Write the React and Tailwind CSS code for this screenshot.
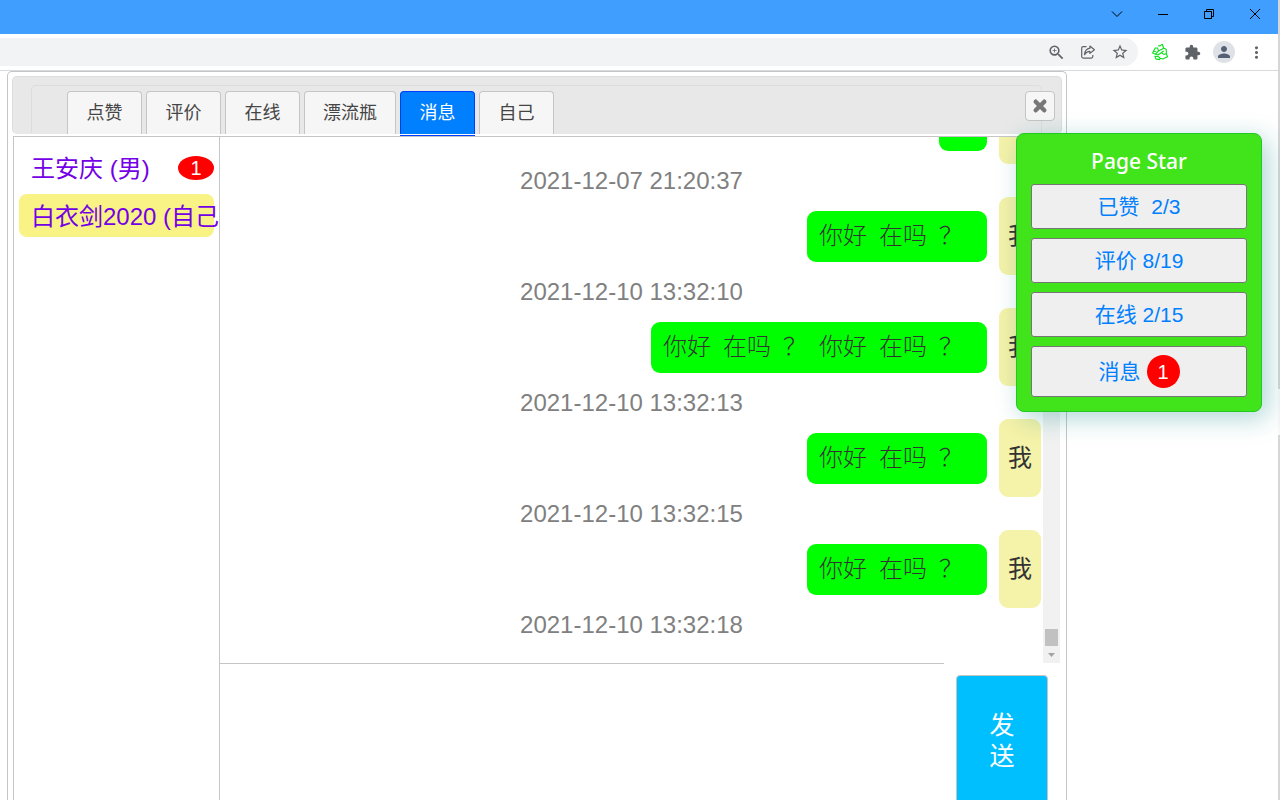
import React from "react";
import { MdExtension, MdStarBorder, MdPerson, MdMoreVert, MdZoomIn } from "react-icons/md";

const tabs = ["点赞", "评价", "在线", "漂流瓶", "消息", "自己"];

const messages = [
  { text: "好", time: "2021-12-07 21:20:37" },
  { text: "你好\u2002在吗\u2002？\u2002", time: "2021-12-10 13:32:10" },
  { text: "你好\u2002在吗\u2002？\u2002你好\u2002在吗\u2002？\u2002", time: "2021-12-10 13:32:13" },
  { text: "你好\u2002在吗\u2002？\u2002", time: "2021-12-10 13:32:15" },
  { text: "你好\u2002在吗\u2002？\u2002", time: "2021-12-10 13:32:18" },
];

function WindowButton({ label, children }) {
  return (
    <button type="button" aria-label={label} className="flex h-7 w-[46px] items-center justify-center">
      <svg width="12" height="12" viewBox="0 0 12 12" fill="none" stroke="#000" strokeWidth="1">
        {children}
      </svg>
    </button>
  );
}

function TitleBar() {
  return (
    <header className="flex h-[34px] shrink-0 justify-end bg-[#409eff]">
      <WindowButton label="Search tabs"><path d="M1 3.5 6 8.5 11 3.5" /></WindowButton>
      <WindowButton label="Minimize"><path d="M1 6.5H11" /></WindowButton>
      <WindowButton label="Restore"><path d="M1.5 3.5H8.5V10.5H1.5ZM3.5 3.5V1.5H10.5V8.5H8.5" /></WindowButton>
      <WindowButton label="Close"><path d="M1 1 11 11M11 1 1 11" /></WindowButton>
    </header>
  );
}

function ToolButton({ label, children }) {
  return (
    <button type="button" aria-label={label} className="flex h-7 w-8 items-center justify-center text-[#5f6368]">
      {children}
    </button>
  );
}

function Toolbar() {
  return (
    <div className="flex h-[37px] shrink-0 items-center border-b border-[#d9dadc] bg-white pr-1.5">
      <div className="flex h-7 flex-1 items-center justify-end rounded-r-full bg-[#f1f3f4] pr-0.5">
        <ToolButton label="Zoom"><MdZoomIn size={19} /></ToolButton>
        <ToolButton label="Share">
          <svg width="16" height="16" viewBox="0 0 16 16" fill="none" stroke="currentColor" strokeWidth="1.2" strokeLinejoin="round">
            <path d="M6.5 2.6H3.2Q1.7 2.6 1.7 4.1V12.6Q1.7 14.1 3.2 14.1H11.3Q12.8 14.1 12.8 12.6V11" />
            <path d="M9.9 2 14.4 5.7 9.9 9.4V7.3Q6.5 7.2 4.5 10.7 4.9 5 9.9 4.2Z" />
          </svg>
        </ToolButton>
        <ToolButton label="Bookmark"><MdStarBorder size={18} /></ToolButton>
      </div>
      <div className="ml-1.5 flex">
        <ToolButton label="Page Star">
          <svg width="18" height="18" viewBox="0 0 18 18" fill="none" stroke="#0be01b" strokeWidth="1.1" strokeLinejoin="round">
            <path d="M7 2.7 9 2.9 11.3 1.3 12.7 5.3 7.5 7.9 6.5 5 4.2 5 1.6 10 4.6 11.2 7.5 7.9" />
            <path d="M12.7 5.3 15.2 6.2 15.4 10.8 16.5 13.8 11.8 16 9.3 15.2 8.5 16.6 4.8 15.9 3.9 13.2 7.5 13.8 9.3 15.2" />
            <path d="M4.6 11.2 7 12 10.2 9.7 12.8 11.4 15.4 10.8M10.2 9.7 12.7 8M3 8.2 5.2 8.8" />
          </svg>
        </ToolButton>
        <ToolButton label="Extensions"><MdExtension size={17} /></ToolButton>
        <ToolButton label="Profile">
          <span className="flex size-[22px] items-center justify-center rounded-full bg-[#dee1e6] text-[#566074]">
            <MdPerson size={18} />
          </span>
        </ToolButton>
        <ToolButton label="Menu"><MdMoreVert size={19} /></ToolButton>
      </div>
    </div>
  );
}

function TabHeader() {
  return (
    <div className="flex h-[58px] shrink-0 rounded-[5px] border border-[#dddddd] border-b-[#e8e8e8] bg-[#e8e8e8] pt-2 pr-1.5 pl-[18px]">
      <nav className="flex flex-1 gap-1 rounded-t-[5px] border border-b-0 border-[#dddddd] pt-[5px] pl-[35px]">
        {tabs.map((tab) => (
          <button
            key={tab}
            type="button"
            className={
              tab === "消息"
                ? "relative h-[43px] min-w-[75px] rounded-t-sm border border-b-0 border-[#003eff] bg-[#007fff] px-[18px] text-lg text-white"
                : "h-[43px] min-w-[75px] rounded-t-sm border border-b-0 border-[#c5c5c5] bg-[#f6f6f6] px-[18px] text-lg text-[#454545]"
            }
          >
            {tab}
            {tab === "消息" && <span className="absolute -inset-x-px -bottom-0.5 h-px bg-[#003eff]" />}
          </button>
        ))}
      </nav>
      <button
        type="button"
        aria-label="Close dialog"
        className="-ml-[17px] mt-1.5 flex size-[30px] items-center justify-center rounded-sm border border-[#c5c5c5] bg-[#f6f6f6]"
      >
        <svg width="16" height="16" viewBox="0 0 16 16" stroke="#777777" strokeWidth="4.4" strokeLinecap="round">
          <path d="M3.7 3.7 12.3 12.3M12.3 3.7 3.7 12.3" />
        </svg>
      </button>
    </div>
  );
}

function Contacts() {
  return (
    <ul className="flex w-[206px] shrink-0 flex-col gap-[5px] overflow-hidden border-r border-[#c5c5c5] pt-2.5 pr-[5px] pl-[5px] text-2xl text-[#7300e6]">
      <li className="flex h-[42px] items-center justify-between pl-3">
        <a href="#wang" className="pt-0.5">王安庆 (男)</a>
        <span className="flex h-6 w-9 items-center justify-center rounded-[50%] bg-[#ff0000] text-xl text-white">1</span>
      </li>
      <li className="flex h-[43px] items-center rounded-lg bg-[#f9f285] pl-3 whitespace-nowrap">
        <a href="#self" className="pt-0.5">白衣剑2020 (自己)</a>
      </li>
    </ul>
  );
}

function Conversation() {
  return (
    <div className="flex min-h-0 flex-1 pr-0.5">
      <ol className="flex min-w-0 flex-1 flex-col justify-end overflow-hidden pb-[22px] text-2xl">
        {messages.map((message) => (
          <li key={message.time} className="shrink-0">
            <div className="flex items-center justify-end gap-3 pr-0.5">
              <p className="flex h-[51px] items-center rounded-[9px] bg-[#00ff00] px-3 font-light whitespace-pre text-[#333333]">
                {message.text}
              </p>
              <span className="flex h-[78px] w-[42px] items-center justify-center rounded-[9px] bg-[#f5f2a9] text-[#333333]">我</span>
            </div>
            <time className="block h-[33px] text-center leading-[33px] text-[#808080]">{message.time}</time>
          </li>
        ))}
      </ol>
      <div className="flex w-[17px] shrink-0 flex-col items-center justify-end bg-[#f1f1f1]">
        <div className="h-[17px] w-[13px] bg-[#c1c1c1]" />
        <div className="flex h-[17px] items-center justify-center">
          <svg width="7" height="4" viewBox="0 0 7 4" fill="#a3a3a3"><path d="M0 0H7L3.5 4Z" /></svg>
        </div>
      </div>
    </div>
  );
}

function Composer() {
  return (
    <form className="flex h-[137px] shrink-0 gap-3 overflow-hidden pr-3.5">
      <textarea aria-label="消息内容" className="min-w-0 flex-1 resize-none border-t border-[#c5c5c5] bg-white p-3 text-2xl outline-none" />
      <button
        type="button"
        className="mt-3 h-[161px] w-[92px] shrink-0 rounded-sm border border-[#c5c5c5] bg-[#00bfff] px-8 pb-[30px] text-[25px] leading-[31px] text-white"
      >
        发送
      </button>
    </form>
  );
}

function PageStar() {
  const button = "h-[45px] rounded-[3px] border border-[#767676] bg-[#efefef] whitespace-pre";
  return (
    <aside className="absolute top-[133px] right-[18px] flex w-[246px] flex-col gap-[9px] rounded-lg border border-[#22c922] bg-[#41e31a] px-3.5 pt-3.5 pb-3.5 text-[21px] leading-7 text-[#0080ff] shadow-[6px_6px_26px_rgba(0,128,128,0.32)]">
      <h2 className="text-center font-['Noto_Sans',sans-serif] text-[21px] leading-[27px] font-medium text-white">Page Star</h2>
      <button type="button" className={button}>{"已赞  2/3"}</button>
      <button type="button" className={button}>评价 8/19</button>
      <button type="button" className={button}>在线 2/15</button>
      <button type="button" className="flex h-[51px] items-center justify-center gap-1.5 rounded-[3px] border border-[#767676] bg-[#efefef]">
        消息
        <span className="flex size-[33px] items-center justify-center rounded-full bg-[#ff0000] text-xl text-white">1</span>
      </button>
    </aside>
  );
}

export default function App() {
  return (
    <div className="relative flex h-screen overflow-hidden bg-white font-['Liberation_Sans','Noto_Sans_CJK_SC',sans-serif]">
      <div className="flex min-w-0 flex-1 flex-col">
        <TitleBar />
        <Toolbar />
        <main className="mr-[211px] ml-[7px] flex min-h-0 flex-1 flex-col rounded-t-[5px] border border-b-0 border-[#c5c5c5] px-1 pt-1">
          <TabHeader />
          <section className="mt-0.5 ml-px flex min-h-0 flex-1 border-t border-l border-[#c5c5c5]">
            <Contacts />
            <div className="flex min-w-0 flex-1 flex-col">
              <Conversation />
              <Composer />
            </div>
          </section>
        </main>
      </div>
      <div className="flex w-0.5 shrink-0 flex-col bg-[#d6d6d6]">
        <div className="mt-[389px] h-[46px] bg-[#f8f8f8]" />
      </div>
      <PageStar />
    </div>
  );
}
